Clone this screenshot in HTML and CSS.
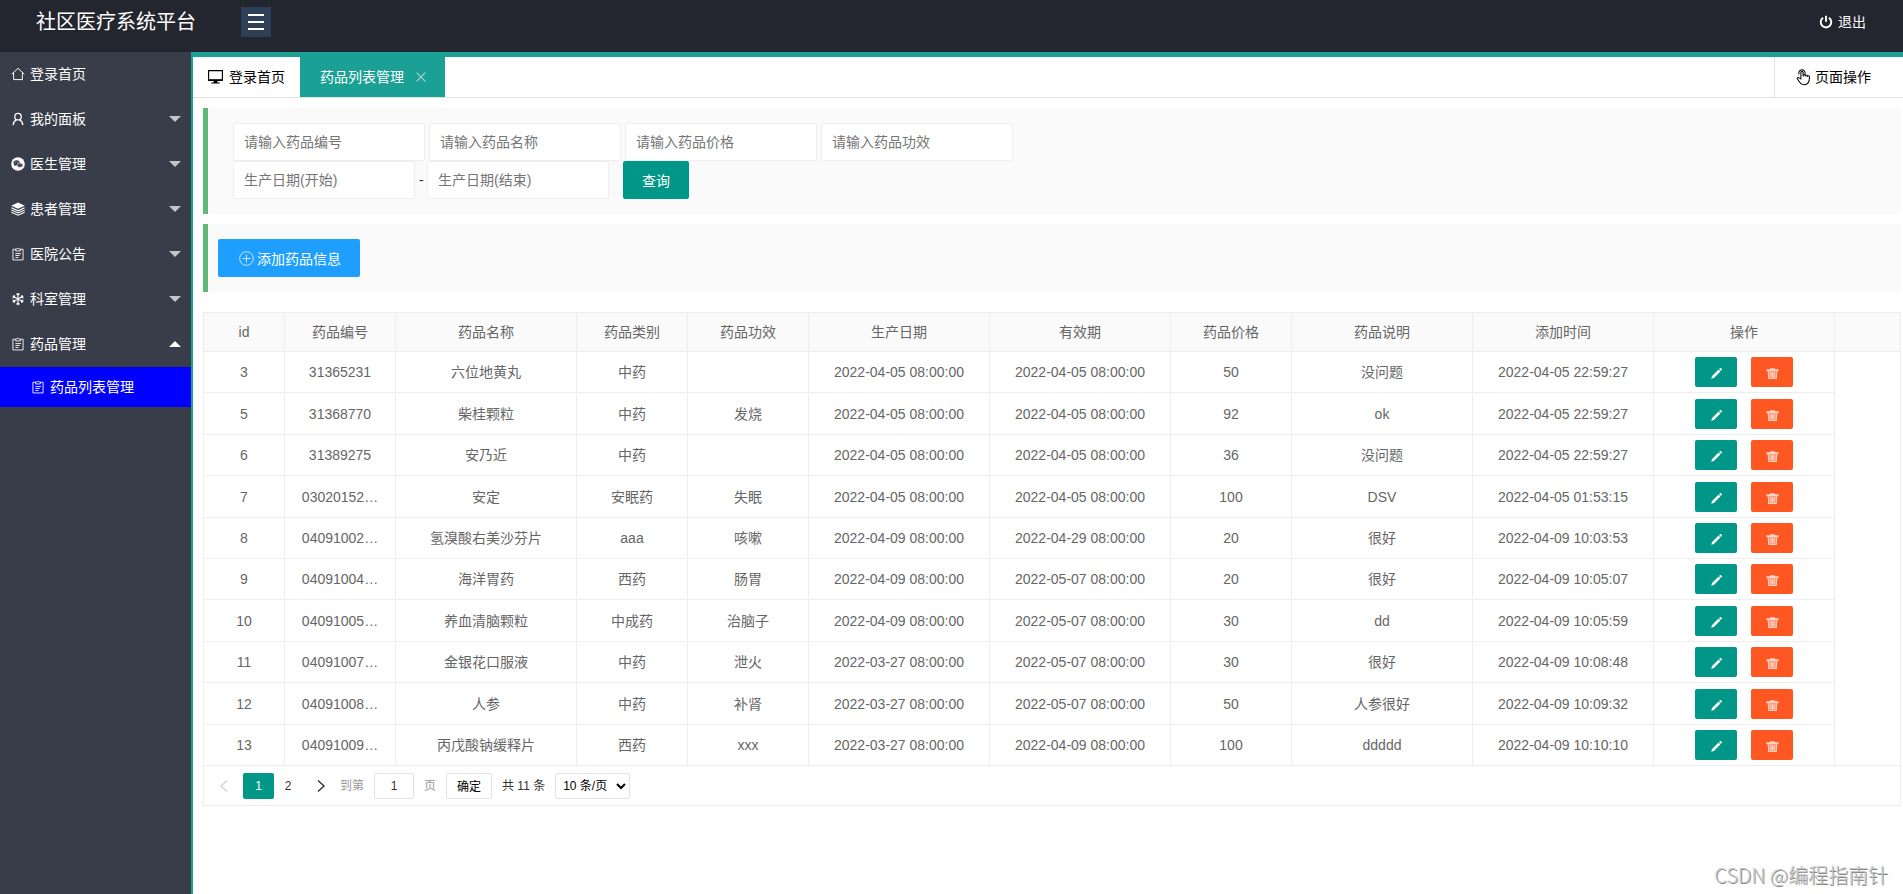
FILE: index.html
```html
<!DOCTYPE html>
<html lang="zh-CN">
<head>
<meta charset="utf-8">
<title>社区医疗系统平台</title>
<link rel="stylesheet" href="styles.css">
</head>
<body>
<svg class="sprite" aria-hidden="true">
  <symbol id="i-home" viewBox="0 0 16 16"><path d="M.8 8.200 8 1.500l7.200 6.700M3 6.800v7.600h10V6.800" fill="none" stroke="currentColor" stroke-width="1.100"/></symbol>
  <symbol id="i-user" viewBox="0 0 16 16"><circle cx="8" cy="5.300" r="3.700" fill="none" stroke="currentColor" stroke-width="1.500"/><path d="M2.500 15c.2-3 1.600-5 3.700-6.100M13.500 15c-.2-3-1.600-5-3.700-6.100" fill="none" stroke="currentColor" stroke-width="1.500"/></symbol>
  <symbol id="i-chat" viewBox="0 0 16 16"><circle cx="8" cy="8" r="7.800" fill="currentColor"/><ellipse cx="6.400" cy="6.700" rx="3.600" ry="2.900" fill="#393d49"/><path d="M4 8.500l-.3 2 2-1.200z" fill="#393d49"/><ellipse cx="10.200" cy="9.300" rx="3.200" ry="2.500" fill="#393d49" stroke="currentColor" stroke-width=".6"/><g fill="currentColor"><circle cx="5.200" cy="6" r=".5"/><circle cx="7.600" cy="6" r=".5"/><circle cx="9.200" cy="8.900" r=".4"/><circle cx="11.200" cy="8.900" r=".4"/></g></symbol>
  <symbol id="i-layers" viewBox="0 0 16 16"><path d="M8 .6 15.800 4.200 8 7.800.2 4.200z" fill="currentColor"/><path d="M.4 6.600 8 10.100l7.600-3.500M.4 9.100 8 12.600l7.600-3.500M.4 11.600 8 15.100l7.600-3.500" fill="none" stroke="currentColor" stroke-width="1.200"/></symbol>
  <symbol id="i-note" viewBox="0 0 16 16"><path d="M5 2.500H2.200v12.300h11.600V2.500H11M5.300 2.300h1.500a1.300 1.300 0 0 1 2.400 0h1.500v2.200H5.300zM5 7.500h6.500M5 9.700h5M5 12h3.500" fill="none" stroke="currentColor" stroke-width="1"/></symbol>
  <symbol id="i-snow" viewBox="0 0 16 16"><path d="M8 1v14M1.900 4.500l12.200 7M1.900 11.500l12.200-7M6.200 1.900 8 3.700l1.800-1.800M6.200 14.100 8 12.300l1.800 1.800M1.800 6.900l2.500-.7-.6-2.500M14.200 9.100l-2.500.7.600 2.500M1.800 9.100l2.500.7-.6 2.500M14.200 6.900l-2.500-.7.600-2.500" fill="none" stroke="currentColor" stroke-width="1.300"/></symbol>
  <symbol id="i-screen" viewBox="0 0 18 16"><path d="M1.700 1.200h14.600v10.300H1.700z" fill="none" stroke="currentColor" stroke-width="1.200"/><path d="M1.200 10.400h15.600v1.800H1.200zM7 12h4v2H7zM4.500 13.800h9V15h-9z" fill="currentColor"/></symbol>
  <symbol id="i-hand" viewBox="0 0 16 18"><path d="M5.200 11V4.200a1.200 1.200 0 0 1 2.400 0v4.300-1.200c0-1.300 2.300-1.300 2.300 0v1.200-.8c0-1.200 2.200-1.200 2.200.2v1-.4c0-1.200 2.300-1.100 2.300.4 0 4.600-.7 8.300-5.400 8.300-3.600 0-4.700-1.700-7.500-6-.7-1.200.6-2.200 1.700-1.300zM3.300 6.200a3.400 3.400 0 1 1 6.300-.5" fill="none" stroke="currentColor" stroke-width="1.100"/></symbol>
  <symbol id="i-power" viewBox="0 0 16 16"><path d="M4.700 3.200a6 6 0 1 0 6.600 0M8 .8v7" fill="none" stroke="currentColor" stroke-width="2.200"/></symbol>
  <symbol id="i-plus" viewBox="0 0 16 16"><circle cx="8" cy="8" r="7.300" fill="none" stroke="currentColor"/><path d="M8 3.800v8.400M3.800 8h8.400" stroke="currentColor"/></symbol>
  <symbol id="i-edit" viewBox="0 0 16 16"><path d="M1.500 14.500l1-3.300 8-8 2.300 2.300-8 8zM11.200 2.500l1-1c1-.9 3.200 1.200 2.300 2.300l-1 1z" fill="currentColor"/></symbol>
  <symbol id="i-trash" viewBox="0 0 16 16"><path d="M5 1.500h6v1.200h4.500v2.600H.5V2.700H5z" fill="currentColor"/><path d="M2.200 5.300h11.600l-.5 9.500H2.700z" fill="currentColor" opacity=".55"/><path d="M2.800 5.300l.5 8.900h9.400l.5-8.900M6.100 6.500v6M8 6.500v6M9.900 6.500v6" fill="none" stroke="currentColor" stroke-width="1.200"/></symbol>
  <symbol id="i-left" viewBox="0 0 12 14"><path d="M9 1.500 3 7l6 5.500" fill="none" stroke="currentColor" stroke-width="1.400"/></symbol>
  <symbol id="i-right" viewBox="0 0 12 14"><path d="M3 1.500 9 7l-6 5.500" fill="none" stroke="currentColor" stroke-width="1.400"/></symbol>
  <symbol id="i-close" viewBox="0 0 10 10"><path d="M.7.7l8.600 8.600M9.300.7.7 9.300" stroke="currentColor" stroke-width="1.200"/></symbol>
</svg>

<header class="header">
  <h1 class="brand">社区医疗系统平台</h1>
  <button class="toggle" type="button" aria-label="菜单"><span class="bar"></span><span class="bar"></span><span class="bar"></span></button>
  <a class="logout" href="#"><svg class="icon"><use href="#i-power"/></svg>退出</a>
</header>

<div class="shell">
  <nav class="side">
    <a class="nav" href="#"><svg class="icon"><use href="#i-home"/></svg>登录首页</a>
    <a class="nav" href="#"><svg class="icon"><use href="#i-user"/></svg>我的面板<span class="caret"></span></a>
    <a class="nav" href="#"><svg class="icon"><use href="#i-chat"/></svg>医生管理<span class="caret"></span></a>
    <a class="nav" href="#"><svg class="icon"><use href="#i-layers"/></svg>患者管理<span class="caret"></span></a>
    <a class="nav" href="#"><svg class="icon"><use href="#i-note"/></svg>医院公告<span class="caret"></span></a>
    <a class="nav" href="#"><svg class="icon"><use href="#i-snow"/></svg>科室管理<span class="caret"></span></a>
    <a class="nav" href="#"><svg class="icon"><use href="#i-note"/></svg>药品管理<span class="caret caret-up"></span></a>
    <a class="nav nav-sub" href="#"><svg class="icon"><use href="#i-note"/></svg>药品列表管理</a>
  </nav>

  <main class="main">
    <div class="tabs">
      <a class="tab" href="#"><svg class="icon icon-screen"><use href="#i-screen"/></svg>登录首页</a>
      <a class="tab tab-on" href="#">药品列表管理<svg class="close"><use href="#i-close"/></svg></a>
      <a class="tab-ops" href="#"><svg class="icon icon-hand"><use href="#i-hand"/></svg>页面操作</a>
    </div>

    <div class="content">
      <form class="panel search">
        <div class="fields">
          <input class="input" type="text" placeholder="请输入药品编号" aria-label="药品编号">
          <input class="input" type="text" placeholder="请输入药品名称" aria-label="药品名称">
          <input class="input" type="text" placeholder="请输入药品价格" aria-label="药品价格">
          <input class="input" type="text" placeholder="请输入药品功效" aria-label="药品功效">
        </div>
        <div class="fields">
          <input class="input input-date" type="text" placeholder="生产日期(开始)" aria-label="生产日期(开始)">
          <span class="dash">-</span>
          <input class="input input-date" type="text" placeholder="生产日期(结束)" aria-label="生产日期(结束)">
          <button class="btn query" type="button">查询</button>
        </div>
      </form>

      <div class="panel">
        <button class="btn add" type="button"><svg class="icon"><use href="#i-plus"/></svg>添加药品信息</button>
      </div>

      <section class="grid">
        <table class="table">
          <colgroup><col class="c-id"><col class="c-s"><col class="c-l"><col class="c-s"><col class="c-m"><col class="c-l"><col class="c-l"><col class="c-m"><col class="c-l"><col class="c-l"><col class="c-l"><col></colgroup>
          <thead><tr><th>id</th><th>药品编号</th><th>药品名称</th><th>药品类别</th><th>药品功效</th><th>生产日期</th><th>有效期</th><th>药品价格</th><th>药品说明</th><th>添加时间</th><th>操作</th><th></th></tr></thead>
          <tbody id="rows"></tbody>
        </table>
        <div class="pager">
          <button class="arrow arrow-off" type="button" aria-label="上一页"><svg class="chev"><use href="#i-left"/></svg></button>
          <button class="page page-on" type="button">1</button>
          <button class="page" type="button">2</button>
          <button class="arrow arrow-next" type="button" aria-label="下一页"><svg class="chev"><use href="#i-right"/></svg></button>
          <label class="skip">到第<input class="skip-input" type="text" value="1">页</label>
          <button class="ok" type="button">确定</button>
          <span class="count">共 11 条</span>
          <select class="limit" aria-label="每页条数"><option>10 条/页</option></select>
        </div>
      </section>
    </div>
  </main>
</div>
<div class="mark">CSDN @编程指南针</div>
<script src="rows.js"></script>
</body>
</html>
```
FILE: rows.js
```js
const rows = [
  ["3", "31365231", "六位地黄丸", "中药", "", "2022-04-05 08:00:00", "2022-04-05 08:00:00", "50", "没问题", "2022-04-05 22:59:27"],
  ["5", "31368770", "柴桂颗粒", "中药", "发烧", "2022-04-05 08:00:00", "2022-04-05 08:00:00", "92", "ok", "2022-04-05 22:59:27"],
  ["6", "31389275", "安乃近", "中药", "", "2022-04-05 08:00:00", "2022-04-05 08:00:00", "36", "没问题", "2022-04-05 22:59:27"],
  ["7", "03020152…", "安定", "安眠药", "失眠", "2022-04-05 08:00:00", "2022-04-05 08:00:00", "100", "DSV", "2022-04-05 01:53:15"],
  ["8", "04091002…", "氢溴酸右美沙芬片", "aaa", "咳嗽", "2022-04-09 08:00:00", "2022-04-29 08:00:00", "20", "很好", "2022-04-09 10:03:53"],
  ["9", "04091004…", "海洋胃药", "西药", "肠胃", "2022-04-09 08:00:00", "2022-05-07 08:00:00", "20", "很好", "2022-04-09 10:05:07"],
  ["10", "04091005…", "养血清脑颗粒", "中成药", "治脑子", "2022-04-09 08:00:00", "2022-05-07 08:00:00", "30", "dd", "2022-04-09 10:05:59"],
  ["11", "04091007…", "金银花口服液", "中药", "泄火", "2022-03-27 08:00:00", "2022-05-07 08:00:00", "30", "很好", "2022-04-09 10:08:48"],
  ["12", "04091008…", "人参", "中药", "补肾", "2022-03-27 08:00:00", "2022-05-07 08:00:00", "50", "人参很好", "2022-04-09 10:09:32"],
  ["13", "04091009…", "丙戊酸钠缓释片", "西药", "xxx", "2022-03-27 08:00:00", "2022-04-09 08:00:00", "100", "ddddd", "2022-04-09 10:10:10"]
];
const actions = '<td><div class="acts">' +
  '<button class="act" type="button" aria-label="编辑"><svg class="act-icon"><use href="#i-edit"/></svg></button>' +
  '<button class="act act-del" type="button" aria-label="删除"><svg class="act-icon"><use href="#i-trash"/></svg></button>' +
  '</div></td><td class="rest"></td>';
document.getElementById("rows").innerHTML = rows
  .map(r => "<tr>" + r.map(c => "<td>" + c + "</td>").join("") + actions + "</tr>")
  .join("");
```
FILE: styles.css
```css
* { box-sizing: border-box; }
body {
  margin: 0;
  min-height: 100vh;
  display: flex;
  flex-direction: column;
  font: 14px/24px "Liberation Sans", "Noto Sans CJK SC", sans-serif;
  color: #333;
  background: #fff;
}
a { color: inherit; text-decoration: none; }
button, input, select { font-family: inherit; font-size: 14px; margin: 0; }
button { border: 0; padding: 0; cursor: pointer; }
.sprite { display: none; }
.icon { width: 14px; height: 14px; flex: none; }

.header {
  display: flex;
  align-items: flex-start;
  height: 52px;
  padding: 7px 37px 0 36px;
  background: #23262e;
  color: #fff;
}
.brand { width: 205px; margin: 0; font-size: 20px; font-weight: 400; line-height: 30px; }
.toggle {
  width: 30px;
  height: 30px;
  display: flex;
  flex-direction: column;
  align-items: center;
  justify-content: center;
  gap: 5px;
  background: #2f4056;
}
.bar { width: 16px; height: 2px; background: #fff; }
.logout { margin-left: auto; display: flex; align-items: center; gap: 5px; line-height: 30px; }

.shell { flex: 1; display: flex; }
.side { width: 191px; flex: none; background: #393d49; color: #fff; }
.nav { display: flex; align-items: center; gap: 5px; height: 45px; padding: 0 10px 2px 11px; }
.nav-sub { height: 40px; padding: 0 10px 0 31px; background: #00f; }
.caret {
  margin-left: auto;
  border: 6px solid transparent;
  border-bottom-width: 0;
  border-top-color: #c4c5c8;
}
.caret-up { border-bottom: 6px solid #fff; border-top-width: 0; }

.main { flex: 1; min-width: 0; border-top: 5px solid #1aa094; border-left: 2px solid #1aa094; }
.tabs { display: flex; height: 41px; border-bottom: 1px solid #e2e2e2; color: #000; }
.tab { display: flex; align-items: center; gap: 5px; padding: 0 15px 0 14px; }
.tab .icon-screen { width: 17px; height: 16px; }
.tab-on { gap: 12px; padding: 0 19px 0 20px; background: #1aa094; color: #fff; }
.close { width: 10px; height: 10px; color: #a9d5d1; }
.tab-ops {
  display: flex;
  align-items: center;
  gap: 4px;
  margin-left: auto;
  padding: 0 32px 0 21px;
  border-left: 1px solid #e2e2e2;
}
.tab-ops .icon-hand { width: 15px; height: 18px; }

.content { padding: 10px 2px 0 10px; }
.panel {
  margin-bottom: 10px;
  padding: 15px 10px;
  border-left: 5px solid #5fb878;
  border-radius: 0 2px 2px 0;
  background: #fafafa;
}
.search { padding-left: 25px; }
.fields { display: flex; align-items: center; gap: 4px; }
.input {
  width: 192px;
  height: 38px;
  padding: 0 10px;
  border: 1px solid #eee;
  border-radius: 2px;
  background: #fff;
}
.input-date { width: 182px; }
.dash { width: 4px; }
.input::placeholder { color: #757575; opacity: 1; }
.btn { height: 38px; border-radius: 2px; color: #fff; }
.query { margin-left: 10px; padding: 0 19px; background: #009688; }
.add { display: flex; align-items: center; gap: 3px; padding: 0 19px 0 21px; background: #1e9fff; }
.add .icon { width: 15px; height: 15px; opacity: .8; }

.grid { margin-top: 20px; border: 1px solid #eee; color: #666; }
.table { width: 100%; table-layout: fixed; border-collapse: separate; border-spacing: 0; }
.c-id { width: 81px; }
.c-s { width: 111px; }
.c-m { width: 121px; }
.c-l { width: 181px; }
.table th, .table td {
  padding: 0;
  height: 41px;
  border: solid #eee;
  border-width: 0 1px 1px 0;
  font-weight: 400;
  text-align: center;
  white-space: nowrap;
  overflow: hidden;
}
.table th { height: 39px; background: #fafafa; }
.table th:last-child { border-right: 0; }
.table tr:nth-child(5n+2) td, .table tr:nth-child(5n+4) td { height: 42px; }
.table .rest { border-width: 0; }
.table tr:last-child .rest { border-bottom-width: 1px; }
.acts { display: flex; justify-content: center; gap: 14px; }
.act {
  width: 42px;
  height: 30px;
  display: flex;
  align-items: center;
  justify-content: center;
  border-radius: 2px;
  background: #009688;
  color: #fff;
}
.act-del { background: #ff5722; color: #ffd5c8; }
.act-icon { width: 13px; height: 13px; margin-top: 3px; }

.pager { display: flex; align-items: center; height: 39px; padding-left: 6px; font-size: 12px; color: #333; }
.pager button, .pager input, .pager select { height: 26px; font-size: 12px; border-radius: 2px; color: #333; }
.pager button { background: none; }
.pager .arrow { width: 28px; padding-top: 4px; }
.pager .arrow-off { margin-right: 5px; color: #d2d2d2; }
.pager .arrow-next { width: 38px; }
.chev { width: 12px; height: 14px; }
.pager .page { width: 28px; }
.pager .page-on { width: 31px; background: #009688; color: #fff; }
.skip { display: flex; align-items: center; color: #999; }
.pager .skip-input { width: 40px; margin: 0 10px; padding: 0; border: 1px solid #e2e2e2; text-align: center; }
.pager .ok { width: 46px; margin: 0 10px; border: 1px solid #e2e2e2; color: #000; }
.pager .limit { width: 75px; margin-left: 10px; padding: 0 0 0 3px; border: 1px solid #e2e2e2; background: #fff; color: #000; }

.mark {
  position: absolute;
  right: 15px;
  bottom: 4px;
  font: 300 20px/30px "Noto Sans CJK SC", sans-serif;
  color: #c8c8c8;
  text-shadow: 1px 1px 0 #888;
}
```
